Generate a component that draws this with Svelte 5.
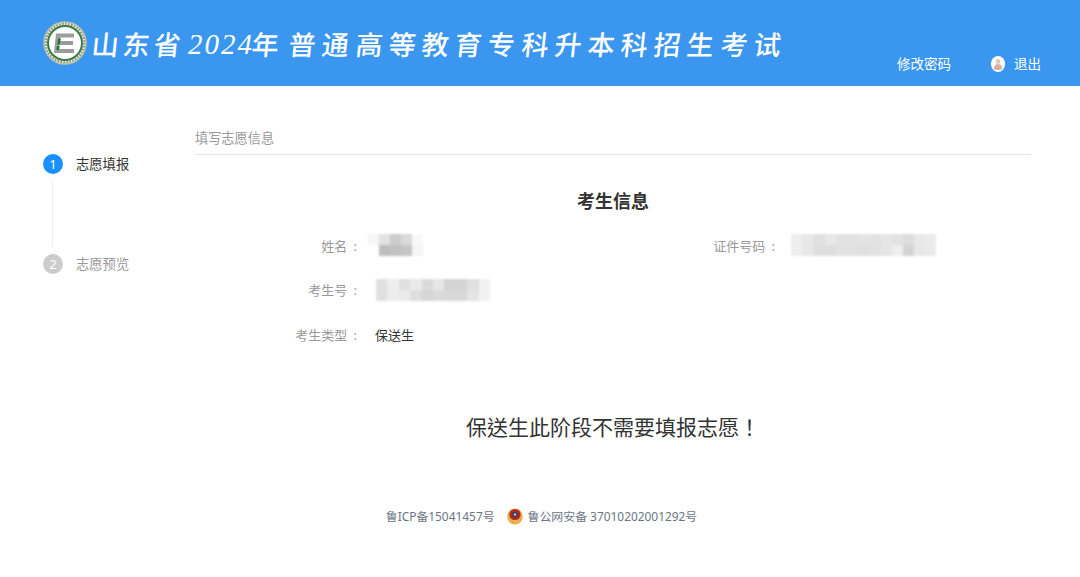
<script>
  const titleLead = '山东省'
  const titleRest = ['年', '普', '通', '高', '等', '教', '育', '专', '科', '升', '本', '科', '招', '生', '考', '试']

  // blurred-out personal data, one grey level per mosaic cell
  const nameBlur = [
    [246, 226, 204, 218, 248],
    [255, 190, 194, 198, 245]
  ]
  const idBlur = [
    [238, 232, 224, 232, 226, 226, 228, 226, 230, 226, 220, 232, 236],
    [238, 232, 222, 222, 226, 226, 224, 226, 230, 238, 212, 232, 234]
  ]
  const numberBlur = [
    [224, 238, 224, 234, 218, 230, 212, 212, 224, 240],
    [224, 236, 234, 222, 214, 218, 216, 216, 228, 242]
  ]

  const grey = (v) => `rgb(${v},${v},${v})`
</script>

{#snippet blur(rows, cell, cls)}
  <div class="blur {cls}">
    {#each rows as row}
      <div class="blur-row">
        {#each row as v}
          <span style="width:{cell}px;background:{grey(v)}"></span>
        {/each}
      </div>
    {/each}
  </div>
{/snippet}

<header class="top">
  <div class="brand">
    <svg class="logo" width="44" height="44" viewBox="0 0 44 44">
      <circle cx="22" cy="22" r="21" fill="#e9ece4" stroke="#b9c2a8" stroke-width="1.5" />
      <circle cx="22" cy="22" r="17" fill="#fff" stroke="#3d7a45" stroke-width="2" />
      <circle cx="22" cy="22" r="19.2" fill="none" stroke="#8a8f78" stroke-width="2" stroke-dasharray="1.6 1.4" />
      <path d="M13 12.5h18v4H17.5l-.6 3.6H30v3.8H16.4l-.6 4H31v4H11z" fill="#9a9d9c" />
      <path d="M15.2 17.5h2.6l-.9 6h-2.6zM14 25h2.6l-.5 4h-2.6z" fill="#1f7a34" />
    </svg>
    <h1 class="title">
      <span class="chars">{titleLead}</span>
      <span class="year">2024</span>
      {#each titleRest as ch}<span class="ch">{ch}</span>{/each}
    </h1>
  </div>
  <nav class="user">
    <span>修改密码</span>
    <span class="logout">
      <svg width="14" height="16" viewBox="0 0 14 16">
        <ellipse cx="7" cy="8" rx="7" ry="8" fill="#fff" />
        <circle cx="7" cy="5.5" r="2.4" fill="#e3c6b6" />
        <path d="M2.8 13c0-3.4 2-5 4.2-5s4.2 1.600 4.200 5c-1.200 1.400-7.200 1.400-8.400 0z" fill="#d8b2a0" />
      </svg>
      退出
    </span>
  </nav>
</header>

<main class="page">
  <aside class="steps">
    <div class="step active">
      <span class="dot">1</span>
      <span class="step-name">志愿填报</span>
    </div>
    <div class="line"></div>
    <div class="step">
      <span class="dot">2</span>
      <span class="step-name">志愿预览</span>
    </div>
  </aside>

  <section class="content">
    <div class="tab">填写志愿信息</div>
    <h2>考生信息</h2>
    <div class="info">
      <div class="field">
        <span class="label">姓名 :</span>
        {@render blur(nameBlur, 11, 'name')}
      </div>
      <div class="field">
        <span class="label">证件号码 :</span>
        {@render blur(idBlur, 11.2, 'id')}
      </div>
      <div class="field">
        <span class="label">考生号 :</span>
        {@render blur(numberBlur, 11.4, 'num')}
      </div>
      <div class="field"></div>
      <div class="field">
        <span class="label">考生类型 :</span>
        <span class="value">保送生</span>
      </div>
    </div>
    <p class="notice">保送生此阶段不需要填报志愿！</p>
  </section>
</main>

<footer class="foot">
  <span>鲁ICP备15041457号</span>
  <span class="police">
    <svg width="16" height="18" viewBox="0 0 16 18">
      <ellipse cx="8" cy="9.500" rx="7.800" ry="8" fill="#e5b04e" />
      <circle cx="8" cy="7.500" r="5.600" fill="#b3261e" />
      <circle cx="8" cy="7.500" r="2.800" fill="#27408b" />
      <circle cx="8" cy="7.500" r="1.200" fill="#f2d25c" />
    </svg>
    鲁公网安备 37010202001292号
  </span>
</footer>

<style>
  :global(body) {
    margin: 0;
    background: #fff;
    font-family: "Noto Sans", "Noto Sans CJK SC", sans-serif;
  }

  .top {
    height: 86px;
    background: #3a96ef;
    color: #fff;
    display: flex;
    justify-content: space-between;
    box-sizing: border-box;
    padding: 0 39px 0 43px;
  }

  .brand {
    display: flex;
    align-items: center;
    gap: 5px;
    height: 86px;
  }

  .logo {
    flex-shrink: 0;
  }

  .title {
    margin: 2px 0 0;
    display: flex;
    align-items: center;
    font-family: "Noto Sans CJK SC", sans-serif;
    font-size: 27px;
    font-weight: 500;
    line-height: 40px;
    white-space: nowrap;
  }

  .chars {
    letter-spacing: 4px;
    width: 96px;
    transform: skewX(-6deg);
  }

  .year {
    font-family: "Liberation Serif", serif;
    font-style: italic;
    font-size: 29px;
    letter-spacing: 2px;
    width: 64px;
  }

  .ch {
    width: 33.2px;
    transform: skewX(-6deg);
  }

  .ch:nth-child(3) {
    margin-right: 4px;
  }

  .user {
    display: flex;
    align-items: center;
    gap: 40px;
    margin-top: 42px;
    height: 44px;
    font-size: 13.5px;
    line-height: 16px;
  }

  .logout {
    display: flex;
    align-items: center;
    gap: 9px;
  }

  .page {
    display: flex;
    padding: 38px 49px 0 43px;
  }

  .steps {
    width: 152px;
    flex-shrink: 0;
    padding-top: 30px;
    font-size: 13.3px;
    color: #999;
  }

  .step {
    display: flex;
    align-items: center;
    gap: 13px;
    height: 20px;
  }

  .step-name {
    padding-bottom: 2px;
  }

  .step.active {
    color: #333;
  }

  .dot {
    width: 20px;
    height: 20px;
    border-radius: 50%;
    background: #ccc;
    color: #fff;
    font-size: 13px;
    text-align: center;
    line-height: 20px;
  }

  .active .dot {
    background: #1890ff;
  }

  .line {
    width: 1px;
    height: 66px;
    margin: 7px 0 7px 9px;
    background: #eee;
  }

  .content {
    flex: 1;
    min-width: 0;
  }

  .tab {
    height: 30px;
    line-height: 28px;
    font-size: 13.2px;
    color: #999;
    border-bottom: 1px solid #e2e2e2;
  }

  h2 {
    margin: 33px 0 0;
    text-align: center;
    font-size: 18px;
    font-weight: 700;
    line-height: 26px;
    color: #333;
  }

  .info {
    display: grid;
    grid-template-columns: 1fr 1fr;
    grid-auto-rows: 44.500px;
    margin-top: 9px;
    font-size: 13px;
  }

  .field {
    display: flex;
    align-items: center;
  }

  .label {
    width: 162px;
    text-align: right;
    color: #999;
    flex-shrink: 0;
    margin-right: 16px;
    word-spacing: 3px;
  }

  .value {
    color: #333;
    margin-left: 2px;
  }

  .blur {
    display: flex;
    flex-direction: column;
    filter: blur(0.8px);
  }

  .blur-row {
    display: flex;
    height: 11px;
  }

  .blur.name {
    margin-left: -5px;
  }

  .blur.num {
    margin-left: 3px;
  }

  .blur-row span {
    display: block;
  }

  .notice {
    margin: 54px 0 0;
    text-align: center;
    font-family: "Noto Sans CJK TC", sans-serif;
    font-size: 21px;
    line-height: 30px;
    color: #333;
  }

  .foot {
    display: flex;
    justify-content: center;
    align-items: center;
    gap: 12px;
    margin-top: 65px;
    padding-left: 3px;
    font-size: 11.9px;
    line-height: 20px;
    color: #6b7685;
  }

  .police {
    display: flex;
    align-items: center;
    gap: 5px;
  }
</style>
